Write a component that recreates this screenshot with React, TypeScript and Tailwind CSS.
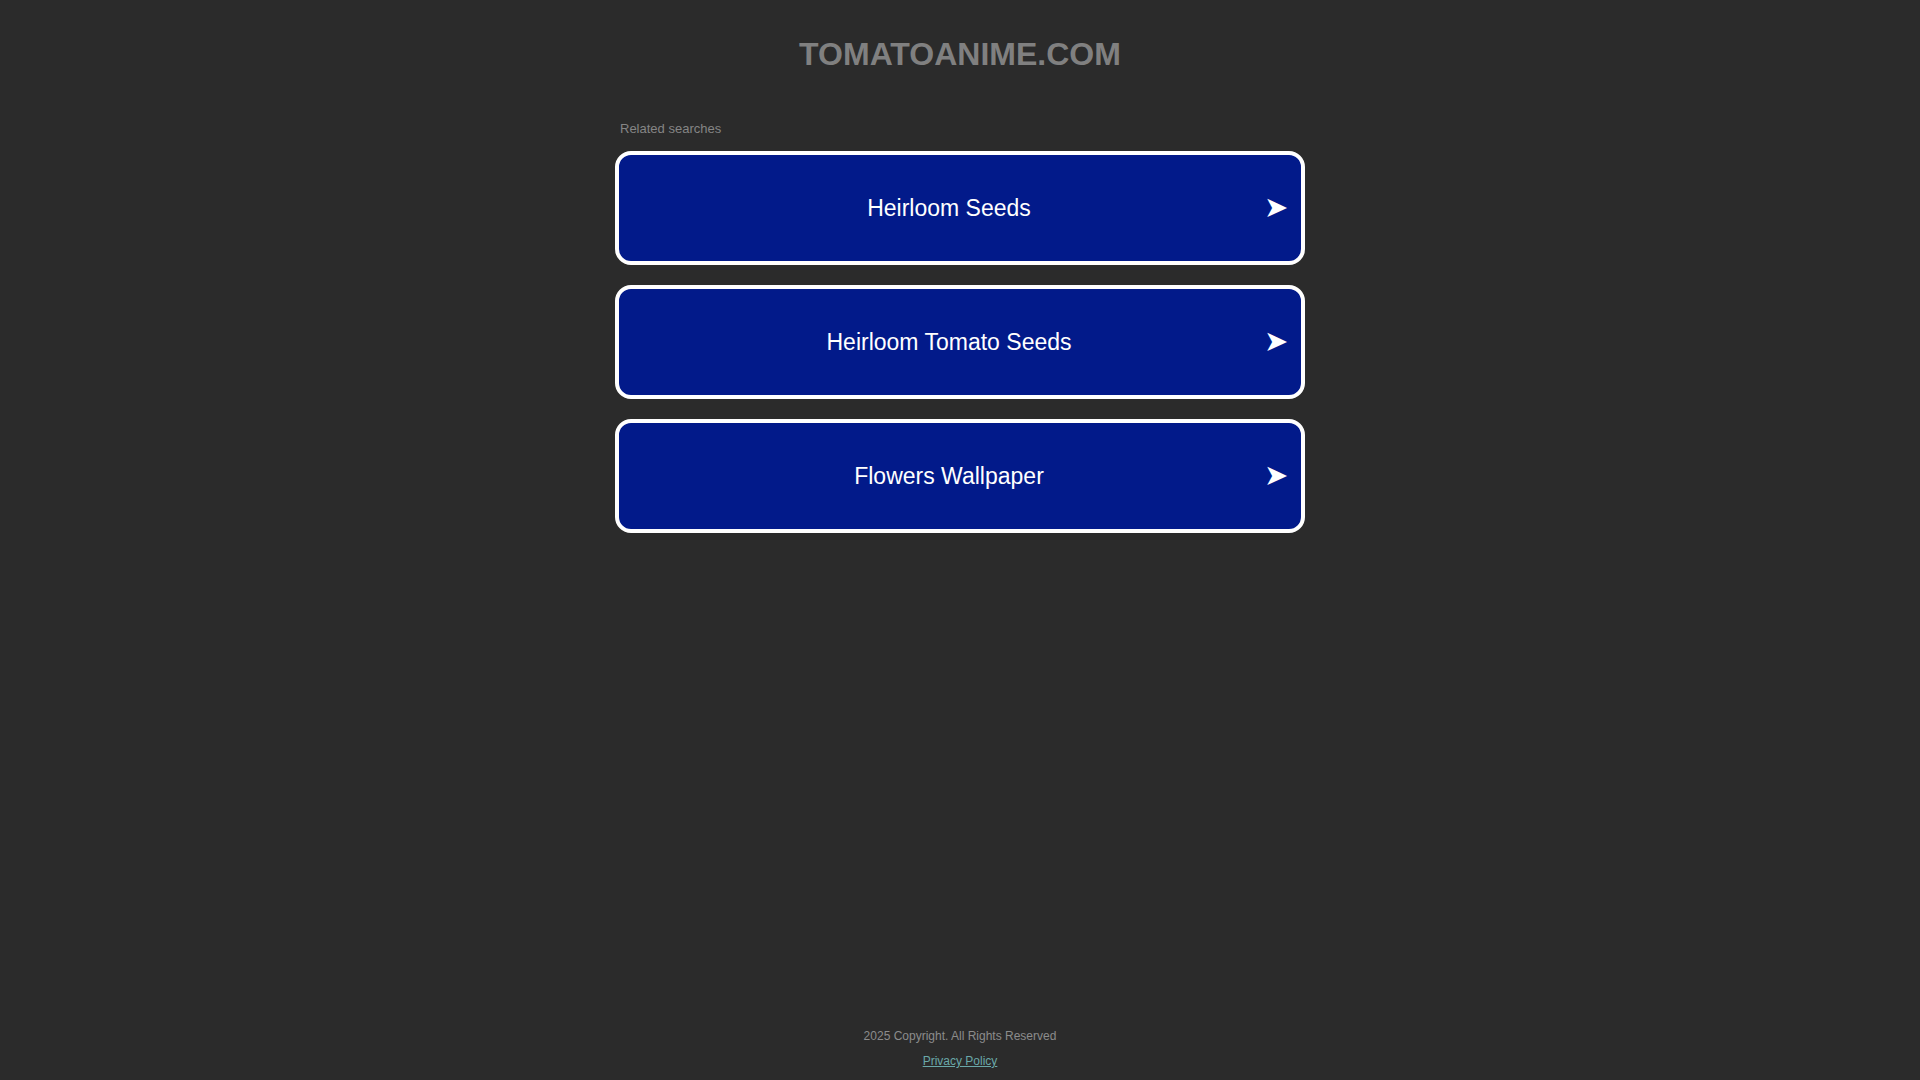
import React from "react";

const searches = ["Heirloom Seeds", "Heirloom Tomato Seeds", "Flowers Wallpaper"];

function SearchCard({ label }: { label: string }) {
  return (
    <a
      href="#"
      className="flex h-[114px] items-center rounded-[16px] border-4 border-white bg-[#021a8a] pl-[15px] pr-[13px] text-white no-underline"
    >
      <span className="flex-1 pt-[2px] text-center text-[23px] leading-none">{label}</span>
      <span className="w-[24px] text-center font-['DejaVu_Sans',sans-serif] text-[29px] leading-none">➤</span>
    </a>
  );
}

export default function App() {
  return (
    <div className="flex min-h-screen flex-col bg-[#2b2b2b] font-['Liberation_Sans',Arial,sans-serif]">
      {/* Domain header */}
      <h1 className="pt-[30px] text-center text-[32px] font-bold text-[#808080]">TOMATOANIME.COM</h1>

      {/* Related searches */}
      <div className="mx-auto mt-[41px] w-[690px]">
        <p className="pl-[5px] text-[13px] text-[#858585]">Related searches</p>
        <div className="mt-[12px] flex flex-col gap-[20px]">
          {searches.map((s) => (
            <SearchCard key={s} label={s} />
          ))}
        </div>
      </div>

      {/* Footer */}
      <footer className="mt-auto flex flex-col items-center pb-[10px] text-[12px]">
        <p className="text-[#8c8c8c]">2025 Copyright. All Rights Reserved</p>
        <a href="#" className="mt-[7px] text-[#6aa8a9] underline">
          Privacy Policy
        </a>
      </footer>
    </div>
  );
}
